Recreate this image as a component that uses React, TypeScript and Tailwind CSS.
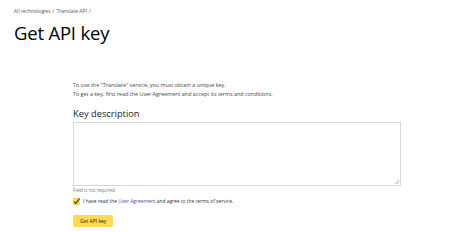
import React from "react";

export default function App() {
  return (
    <div className="w-[474px] h-[232px] bg-white overflow-hidden font-['Open_Sans',sans-serif] text-[#222]">
      <div className="pl-[14px] pt-[8px]">
        <div className="text-[5px] leading-[7px] text-[#555] flex gap-[2px]">
          <span>All technologies</span>
          <span>/</span>
          <span>Translate API</span>
          <span>/</span>
        </div>
        <h1 className="mt-[6px] text-[18.5px] leading-[24px] text-black font-normal tracking-[-0.2px]">Get API key</h1>
      </div>
      <div className="pl-[73px] pt-[36px] w-[401px]">
        <p className="text-[5.4px] leading-[9px] text-[#444]">
          To use the "Translate" service, you must obtain a unique key.
          <br />
          To get a key, first read the User Agreement and accept its terms and conditions.
        </p>
        <div className="mt-[9px] text-[9.3px] leading-[11px] font-medium text-[#222]">Key description</div>
        <div className="mt-[3px] relative w-[328px] h-[64px] border border-[#d6d6d6] bg-white">
          <svg className="absolute right-[1px] bottom-[1px]" width="4" height="4" viewBox="0 0 4 4">
            <path d="M4 0L0 4M4 2L2 4" stroke="#999" strokeWidth="0.7" />
          </svg>
        </div>
        <div className="mt-[1px] text-[4.5px] leading-[6px] text-[#777]">Field is not required.</div>
        <div className="mt-[5px] flex items-center gap-[3px]">
          <div className="w-[7px] h-[7px] bg-[#ffdb4d] flex items-center justify-center">
            <svg width="7" height="7" viewBox="0 0 7 7">
              <path d="M1 3.5L2.8 5.5L6.5 0.5" stroke="#222" strokeWidth="1.1" fill="none" />
            </svg>
          </div>
          <span className="text-[4.9px] leading-[7px] text-[#333]">
            I have read the <span className="text-[#4b4bb4]">User Agreement</span> and agree to the terms of service.
          </span>
        </div>
        <button className="mt-[4px] h-[12px] px-[7px] bg-[#ffdb4d] rounded-[2px] text-[5px] leading-[12px] text-[#222]">Get API key</button>
      </div>
    </div>
  );
}
